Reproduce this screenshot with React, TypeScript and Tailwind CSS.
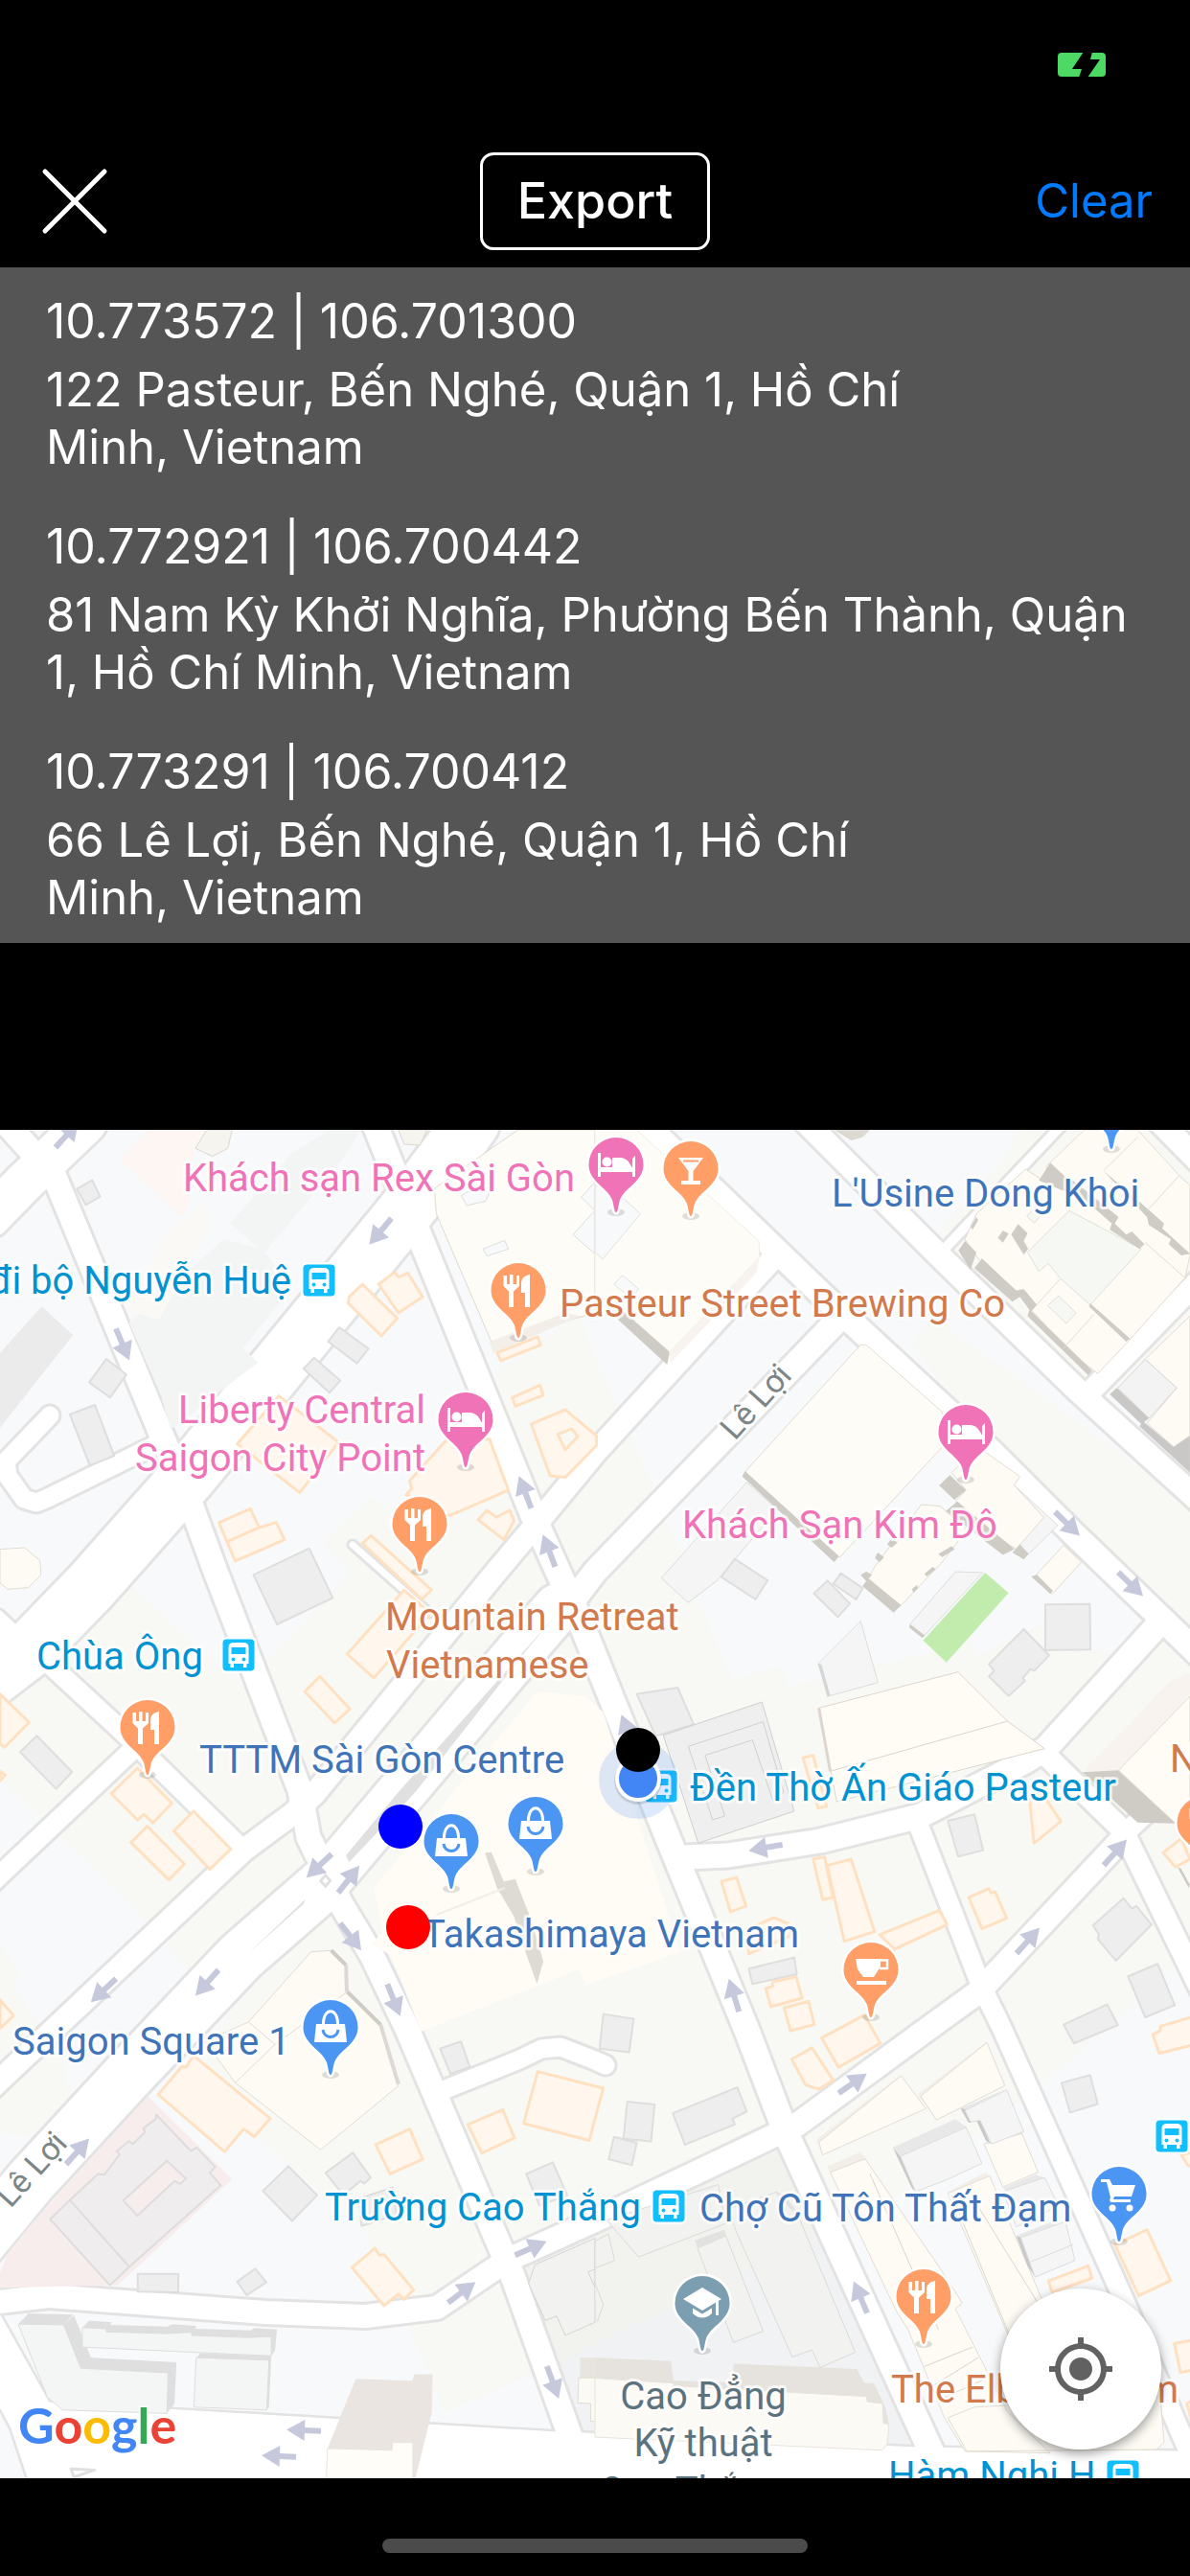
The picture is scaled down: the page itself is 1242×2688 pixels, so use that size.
import type { ReactNode } from "react";
import { MdMyLocation } from "react-icons/md";

type Place = { coords: string; address: string };

const PLACES: Place[] = [
  { coords: "10.773572 | 106.701300", address: "122 Pasteur, Bến Nghé, Quận 1, Hồ Chí\nMinh, Vietnam" },
  { coords: "10.772921 | 106.700442", address: "81 Nam Kỳ Khởi Nghĩa, Phường Bến Thành, Quận\n1, Hồ Chí Minh, Vietnam" },
  { coords: "10.773291 | 106.700412", address: "66 Lê Lợi, Bến Nghé, Quận 1, Hồ Chí\nMinh, Vietnam" },
];

/* ---------- streets: [path, inner width] ---------- */

const STREETS: [string, number][] = [
  ["M0,1165 57,1228 178,1520 200,1572 225,1640 313,1868 322,1917 355,1985 388,2040 424,2115 523,2347 534,2372 596,2545", 25],
  ["M-10,1270 25,1234 90,1172", 42],
  ["M492,1172 425,1262 197,1540 95,1655 30,1722 -30,1768", 58],
  ["M388,1165 434,1280 560,1590 605,1690 700,1925 780,2120 820,2225 975,2565", 26],
  ["M805,1315 621,1516 560,1590 518,1640 328,1872 305,1893 255,1930 62,2112 -10,2180", 23],
  ["M870,1382 621,1640 583,1690", 25],
  ["M582,1678 560,1703 338,1966", 50],
  ["M338,1966 251,2042 139,2160 32,2276 -25,2345", 54],
  ["M660,1160 858,1351 1036,1516 1120,1600 1260,1735", 25],
  ["M832,1162 981,1311 1125,1451 1260,1574", 24],
  ["M985,1304 1110,1172", 10],
  ["M1140,1450 1260,1327", 22],
  ["M1205,1165 1265,1226", 24],
  ["M1209,1695 1092,1824 1070,1838 960,1895 856,1921 760,1936 715,1938", 25],
  ["M1090,1830 1172,1910 1255,2080", 22],
  ["M1175,1912 1265,1828", 20],
  ["M1170,1920 1022,2078 960,2123 832,2217 621,2317 530,2358 456,2408 381,2417 277,2413 51,2396 -10,2403", 24],
  ["M957,1900 1024,2072 1045,2115 1173,2400 1250,2580", 20],
  ["M455,2184 540,2150 565,2138 585,2136 621,2150 632,2155", 19],
  ["M162,1508 48,1564 38,1568 25,1564 8,1540 6,1525 52,1477", 19],
  ["M368,1612 448,1683", 7],
  ["M50,1735 127,1806 248,1925", 20],
  ["M135,1829 -10,1966", 20],
  ["M-5,1690 25,1718", 22],
];

/* ---------- building footprints, grouped by map tile ---------- */

type Shape = { fill: string; stroke?: string; width?: number; d: string };

const GREY = { fill: "#eeeeee", stroke: "#dedede", width: 2 };
const ORANGE = { fill: "#fff6ed", stroke: "#ffe1c2", width: 3 };
const CREAM = { fill: "#fdfbf4", stroke: "#e2ddd2", width: 1 };
const PALE = { fill: "#f4f5f4", stroke: "#dcdedd", width: 1 };
const SHADE = { fill: "#cfcbc5" };

type Tile = { transform: string; shapes: Shape[] };

const TILES: Tile[] = [
  {
    transform: "translate(0 1170) scale(.396 .3333)",
    shapes: [
      { fill: "#ebebeb", d: "M110,580 192,670 0,960 0,725Z" },
      { fill: "#f3f4f4", d: "M340,630 590,370 690,400 770,520 640,710 680,755 450,965 425,860Z M606,320 770,100 870,27 950,27 905,115 697,412Z" },
      { fill: "#fbf9f6", d: "M330,590 440,350 545,250 550,330 420,620Z" },
      { fill: "#fdf6f3", d: "M315,120 390,27 540,27 510,90 500,240 480,300Z" },
      { fill: "#f6f4ef", stroke: "#dcd8cf", width: 1, d: "M515,85 545,27 612,27 600,85 560,110Z M1050,27 1125,27 1107,75 1065,72Z" },
      { fill: "#fdfcf6", stroke: "#dedacf", width: 1, d: "M1365,27 1568,27 1568,600 1295,690 1150,290 1145,210Z" },
      { fill: "#f8f9fb", stroke: "#dddddd", width: 1, d: "M1273,400 1330,373 1340,400 1283,422Z M1215,232 1260,205 1290,225 1280,250 1230,264Z M1568,190 1532,238 1568,280 1510,355 1568,415Z" },
      { fill: "#f4eee9", d: "M1290,690 1490,600 1530,610 1300,725Z" },
      { ...GREY, d: "M203,212 243,184 264,236 226,262Z M280,744 333,793 290,865 235,818Z M184,918 250,888 301,1047 237,1078Z M894,645 971,712 941,758 865,690Z M828,740 897,812 868,850 800,775Z" },
      { ...ORANGE, d: "M955,510 1047,617 1005,672 918,570 920,550Z M1040,473 1050,488 1075,475 1114,550 1050,600 998,510Z M1310,725 1417,675 1425,700 1320,750Z M1350,865 1423,826 1432,858 1358,892Z M1490,903 1572,985 1572,1015 1490,1115 1450,1110 1400,948Z M735,860 892,1005 790,1163 625,1010Z M1290,995 1340,1155 1185,1235 1070,1170 1085,1150 1080,1125 1175,1000Z M1283,1218 1308,1240 1343,1218 1355,1250 1328,1310 1260,1248Z M577,1257 660,1213 683,1272 728,1256 750,1310 620,1377Z M978,1297 1137,1467 1112,1497 955,1322Z M600,1315 683,1272" },
      { ...ORANGE, fill: "#f8f9f3", d: "M1470,980 1507,963 1523,987 1490,1028Z" },
      { ...CREAM, d: "M0,1340 65,1335 105,1375 108,1420 75,1460 20,1465 0,1445Z" },
    ],
  },
  {
    transform: "translate(621 1170) scale(.396 .3333)",
    shapes: [
      { ...CREAM, fill: "#fdfcf6", stroke: "#f0ede6", d: "M0,27 110,27 432,375 434,425 195,725 75,625 0,545Z" },
      { fill: "#f8f9fb", stroke: "#e2e2e2", width: 1, d: "M0,200 60,225 120,290 20,432 0,410Z M50,510 72,482 115,525 95,555Z" },
      { ...SHADE, d: "M75,595 197,722 190,762 60,620Z" },
      { fill: "#f9f3ef", d: "M434,425 425,475 200,755 195,722Z" },
      { ...PALE, d: "M400,1130 480,1215 320,1440 245,1507 175,1430Z" },
      { ...CREAM, fill: "#fdfcf6", d: "M700,700 715,700 915,910 915,1020 645,1365 395,1098Z" },
      { ...SHADE, d: "M395,1095 643,1362 630,1380 405,1130 388,1112Z" },
      { ...PALE, d: "M1105,1140 1220,1265 1143,1355 1110,1340Z" },
      { ...CREAM, d: "M940,1100 1010,1020 1120,1112 1105,1140 1183,1240 1110,1340 1060,1300 950,1190 978,1155Z M860,1200 910,1205 980,1280 915,1380 805,1518 720,1430 740,1390Z M1235,1328 1282,1380 1205,1480 1155,1430Z" },
      { ...SHADE, d: "M935,1108 978,1155 947,1185 907,1140Z M955,1190 1105,1340 1075,1358 925,1220Z M1120,1325 1143,1355 1130,1372 1100,1350Z M745,1350 762,1365 750,1380 738,1368Z M780,1310 798,1318 782,1335 770,1325Z M940,1330 948,1340 915,1365 905,1355Z M890,1395 898,1402 875,1425 868,1418Z" },
      { ...CREAM, d: "M975,370 1005,290 1135,150 1200,200 1190,140 1290,27 1430,27 1540,170 1568,200 1568,420 1555,490 1405,690 1325,790 1240,710 1150,590 1110,530 1010,430Z" },
      { fill: "#f6f8f3", stroke: "#e2e0d8", width: 1, d: "M1140,410 1250,280 1440,400 1305,575 1225,490 1195,445 1170,470Z M1222,547 1268,600 1242,633 1193,577Z M1160,270 1178,290 1158,318 1138,298Z" },
      { ...SHADE, d: "M975,375 1005,410 990,465 958,405Z M1020,430 1110,530 1130,525 1165,575 1150,595 1310,780 1300,795 1140,610 1145,590 1120,550 1100,565 1000,460Z M1200,130 1240,175 1265,190 1380,300 1370,320 1400,355 1415,345 1448,385 1435,400 1357,340 1362,320 1290,245 1170,185Z M1340,155 1400,215 1500,320 1495,335 1568,415 1545,420 1512,385 1518,370 1460,325 1455,300Z M1115,322 1140,350 1130,375 1142,400 1130,418 1097,355Z M1075,342 1090,352 1075,380 1062,365Z M1305,570 1410,680 1400,690 1302,580Z M990,330 1005,300 1010,310 995,340Z" },
      { fill: "none", stroke: "#e2ddd2", width: 1, d: "M1225,495 1160,580 M1315,605 1235,710 M1450,380 1555,490 M1540,170 1455,280 M1430,50 1340,155" },
      { ...CREAM, d: "M1568,610 1450,745 1533,835 1455,945 1525,1020 1568,985Z" },
      { fill: "#f3f3f3", stroke: "#d8d8d8", width: 1, d: "M1450,745 1533,835 1460,930 1378,835Z" },
      { ...SHADE, fill: "#c9c8c6", d: "M1375,835 1460,930 1440,948 1357,855Z M1445,940 1525,1020 1568,985 1568,1100 1435,955Z" },
      { fill: "#dcd8d2", d: "M630,27 725,27 705,50 675,60Z" },
    ],
  },
  {
    transform: "translate(0 1640) scale(.396 .3333)",
    shapes: [
      { fill: "#fffcf5", d: "M985,990 1415,375 1540,390 1590,440 1793,1190 1545,1295 1525,1245 1110,1440 1030,1200 975,1165 1010,1130Z" },
      { fill: "#dedad4", d: "M1278,880 1295,878 1328,970 1358,962 1400,1090 1432,1220 1415,1290 1385,1190 1355,1080 1310,990Z" },
      { fill: "none", stroke: "#f0eee8", width: 2, d: "M1150,1075 1330,990" },
      { fill: "#e0e0e0", d: "M1470,130 1395,235 1095,690 920,910 912,888 1050,690Z M805,1025 800,1040 650,1200Z" },
      { fill: "#ffffff", stroke: "#e0e0e0", width: 3, d: "M858,950 870,968 858,985 845,968Z" },
      { ...GREY, d: "M668,10 815,-73 877,82 730,165Z M97,514 190,627 148,680 53,565Z" },
      { ...ORANGE, d: "M0,383 77,472 12,550 0,540Z M0,625 14,637 0,655Z M1065,58 1135,130 985,333 915,258Z M843,328 922,430 882,474 803,375Z M362,615 453,725 403,787 380,760 362,777 293,695Z M388,797 486,915 445,965 345,848Z M510,750 608,868 553,932 458,812Z M0,1340 36,1390 0,1430Z" },
      { ...CREAM, d: "M820,1190 873,1186 912,1232 915,1315 1005,1420 1050,1610 845,1810 620,1600 540,1470 655,1410Z" },
      { fill: "none", stroke: "#cfcbc5", width: 4, d: "M873,1186 912,1232 M915,1315 1003,1418" },
      { fill: "none", stroke: "#ddd8d4", width: 4, d: "M912,1232 914,1315 M1003,1418 1050,1605" },
      { fill: "none", stroke: "#e2ddd2", width: 1, d: "M655,1410 725,1480 620,1600 M725,1480 915,1315" },
    ],
  },
  {
    transform: "translate(621 1640) scale(.396 .3333)",
    shapes: [
      { fill: "#c1ecae", d: "M1028,3 1090,67 926,284 865,215Z" },
      { ...PALE, d: "M950,0 1022,3 868,200 830,165Z M700,155 746,347 615,390 588,288Z" },
      { ...SHADE, d: "M830,165 870,200 862,207 828,175Z M720,22 807,105 787,128 705,45Z M700,10 715,0 730,10 715,30Z M1150,15 1165,10 1207,60 1200,70Z M835,55 848,42 852,50 840,66Z" },
      { ...SHADE, fill: "#d4d7d5", d: "M588,288 597,290 620,388 612,392Z" },
      { ...GREY, d: "M110,383 218,363 260,478 160,515Z M1187,103 1304,101 1306,244 1187,246Z M1130,180 1197,262 1158,310 1148,305 1127,333 1133,342 1090,389 1038,328 1052,310 1038,290Z M930,780 1000,760 1023,872 957,892Z M405,1243 525,1208 532,1260 415,1291Z M1393,1022 1415,1055 1427,1047 1467,1105 1373,1218 1325,1150 1328,1135 1312,1108Z M1405,1267 1483,1228 1528,1357 1450,1395Z M1235,1418 1350,1355 1378,1420 1262,1477Z M22,1385 102,1400 90,1505 12,1493Z M368,-40 455,27 423,87 333,17Z M613,28 672,100 640,142 577,68Z M648,5 706,52 688,87 628,38Z" },
      { fill: "#efefef", stroke: "#cfcfcf", width: 1, d: "M180,512 440,408 525,750 272,850Z M246,547 443,470 497,690 470,720 415,527 290,575 342,765 310,777Z" },
      { fill: "#fefcf5", stroke: "#dcd6cc", width: 1, d: "M590,427 957,314 1087,468 1185,554 637,720Z M620,625 1087,468" },
      { fill: "none", stroke: "#ddd6cf", width: 3, d: "M590,427 620,625" },
      { fill: "#f8f3ef", d: "M1568,380 1405,620 1285,628 1520,340 1568,320Z" },
      { fill: "#fffcf5", stroke: "#e2ddd2", width: 1, d: "M1568,390 1380,622 1530,788 1568,740Z" },
      { ...SHADE, d: "M1285,628 1378,622 1530,788 1430,785 1370,720Z M1535,925 1545,930 1568,980 1565,990Z" },
      { ...ORANGE, d: "M548,583 575,575 610,735 588,740Z M333,970 373,957 398,1047 357,1065Z M575,900 605,893 627,1020 600,1027Z M612,920 675,900 737,1127 657,1157Z M750,1137 908,1060 928,1105 790,1182Z M1145,710 1185,705 1228,782 1157,850Z M985,1020 1038,992 1043,1005 1055,1003 1085,1085 1020,1118Z M400,1120 472,1083 515,1105 515,1140 405,1197Z M450,1305 468,1298 468,1285 530,1268 546,1335 463,1362Z M498,1365 563,1345 578,1418 515,1437Z M1497,880 1545,835 1568,900 1530,925Z" },
    ],
  },
  {
    transform: "translate(0 2110) scale(.396 .3686)",
    shapes: [
      { fill: "#f8eded", d: "M390,210 612,445 310,745 290,745 0,752 0,710 20,655 80,575Z" },
      { fill: "#efedee", stroke: "#dedcdd", width: 2, d: "M412,262 503,365 518,355 567,410 553,427 582,462 342,692 290,745 132,558 185,503 258,430 275,432 315,375 308,365 340,337 350,345 382,312 378,300 410,275Z M185,505 340,692" },
      { fill: "#f8eded", stroke: "#dedcdd", width: 2, d: "M440,393 490,443 475,458 460,450 362,548 325,505Z" },
      { ...ORANGE, d: "M510,95 712,273 670,325 642,303 592,367 417,205 480,125 490,128Z M990,347 1080,303 1114,388 1028,430Z M1233,290 1325,248 1356,328 1270,371Z M1417,140 1590,187 1553,335 1380,287Z M988,640 1000,660 1012,658 1090,758 1065,785 1050,770 1012,803 928,695Z" },
      { ...GREY, d: "M1160,75 1215,55 1238,127 1187,147Z M760,408 836,490 770,563 693,478Z M930,370 977,440 960,457 950,450 905,490 858,427Z M1387,430 1457,397 1495,490 1422,520Z M363,713 470,713 470,765 363,763Z M673,698 702,737 650,773 625,735Z M945,500 1035,468 1045,545 953,577Z" },
      { fill: "#dfdfdf", d: "M48,855 75,825 193,828 168,857Z M217,865 235,845 295,850 290,857 440,862 455,855 517,860 515,868 660,873 670,866 730,870 725,930 715,945 715,890 655,893 505,887 505,878 440,882 280,877Z M517,950 528,937 715,945 709,1090 703,1098Z M168,857 195,830 240,950 465,963 460,1080 440,1108 443,993 213,980Z" },
      { fill: "#f4f6f5", stroke: "#dddddd", width: 1, d: "M48,855 168,857 213,980 443,993 440,1108 165,1098 125,1062Z M217,865 280,868 280,877 440,882 505,878 505,887 655,893 715,890 715,945 217,920Z M517,950 709,957 703,1098 511,1090Z" },
      { fill: "#eae5e1", d: "M938,1010 1087,1015 1092,997 1140,997 1138,1105 1095,1291 1085,1291 1088,1190 1035,1190 1033,1212 863,1207Z" },
      { fill: "#fffdf8", stroke: "#e8e4dc", width: 1, d: "M863,1207 1033,1212 1035,1190 1088,1190 1088,1300 860,1300Z" },
      { fill: "#f2f2f0", stroke: "#d4d4d2", width: 1, d: "M1410,687 1568,612 1568,850 1490,887 1467,832 1437,845 1393,740Z M1568,700 1550,707 1568,752" },
      { fill: "#e8e4df", d: "M1530,950 1568,950 1568,1007 1528,1007Z" },
      { fill: "#fbfaf5", stroke: "#e2ddd2", width: 1, d: "M1525,1007 1570,1007 1570,1130 1557,1130 1557,1080 1523,1078Z" },
      { fill: "none", stroke: "#e0e0e0", width: 3, d: "M187,1265 250,1268 195,1288Z" },
    ],
  },
  {
    transform: "translate(621 2110) scale(.396 .3686)",
    shapes: [
      { fill: "#f2f2f0", stroke: "#dadad8", width: 1, d: "M30,560 325,460 345,570 115,665Z M270,640 345,605 443,875 365,907Z M350,530 480,480 540,560 686,935 593,978 572,928 520,948 375,600Z M0,620 35,600 52,675 0,697Z M0,740 22,800 5,850" },
      { fill: "#e2e2e1", d: "M263,618 340,588 347,605 270,640Z M470,478 500,490 535,540 520,530Z" },
      { fill: "#e6e2dd", d: "M0,950 200,960 207,1015 365,1020 365,967 690,982 710,1022 735,1022 765,1090 775,1140 760,1135 755,1085 715,1075 0,1030Z" },
      { fill: "#fbfaf5", stroke: "#e8e4dc", width: 1, d: "M0,1008 205,1022 210,1030 715,1060 718,1075 758,1080 760,1135 775,1140 770,1195 757,1212 0,1175Z" },
      { ...GREY, d: "M85,225 157,233 148,338 75,330Z M50,325 110,342 97,405 36,388Z M205,258 375,185 400,253 363,273 368,290 237,347Z M1230,172 1305,150 1325,232 1252,256Z" },
      { ...ORANGE, d: "M572,73 628,165 590,190 555,178 518,105Z M597,45 710,-20 752,60 642,128Z M1370,630 1455,588 1517,732 1433,775Z M1195,733 1300,690 1310,725 1205,765Z M1527,910 1575,900 1575,985 1543,992Z M1470,35 1490,25 1490,12 1575,-15 1575,65 1487,88Z M1545,375 1575,370 1575,410 1562,405Z M1560,1080 1575,1070 1575,1140Z" },
      { fill: "#f4eee9", d: "M583,333 807,148 800,160 600,376Z M612,408 702,367 712,387 620,425Z M850,205 1033,55 1028,70 900,277Z M930,480 1030,425 1042,440 940,490Z" },
      { ...CREAM, d: "M590,340 807,152 872,245 600,376Z M858,210 1033,58 1080,180 900,277Z M620,425 712,387 905,690 968,795 950,812 1085,1100 1200,1220 975,1215 920,1118 825,870 795,820Z M930,485 1040,435 1180,790 1090,890Z M930,1120 1000,1090 1490,1060 1500,1190 1480,1210 980,1215Z M1025,345 1125,315 1168,425 1075,467Z" },
      { fill: "#c9c9c9", d: "M785,355 805,380 845,480 835,470Z M963,245 975,243 992,285 985,285Z M1005,278 1018,278 1042,345 1030,335Z M1110,605 1125,610 1160,722 1140,690Z" },
      { fill: "#e8e8e8", d: "M785,355 950,275 980,297 805,380Z M965,245 1060,200 1085,190 980,247Z M1075,470 1160,432 1185,440 1090,480Z M1110,605 1215,560 1225,570 1125,610Z" },
      { ...PALE, d: "M975,250 1085,192 1130,310 1045,345 1015,278 990,283Z M805,380 978,298 1020,400 930,445 845,480Z M1075,480 1185,440 1222,520 1110,580Z M1122,610 1240,565 1265,675 1160,722Z M1145,680 1260,630" },
      { fill: "none", stroke: "#dad5cb", width: 1, d: "M868,975 995,920 M890,1030 1010,950 M905,1070 1030,1010 M725,430 905,870 M940,490 1090,880 M980,470 1170,800" },
    ],
  },
];

/* ---------- one-way arrows: x, y, heading ---------- */

const ARROWS: [number, number, number][] = [
  [70, 1184, -48], [397, 1285, 130], [128, 1403, 67], [548, 1557, -111], [573, 1618, -111],
  [1114, 1590, 44], [1180, 1653, 44], [655, 1806, -111], [799, 1928, 170], [766, 2082, -107],
  [1164, 1933, -48], [1073, 2025, -48], [333, 1947, 137], [364, 1961, -52], [366, 2021, 52],
  [411, 2087, 68], [108, 2077, 137], [216, 2069, 132], [81, 2245, -48], [554, 2346, -24],
  [482, 2392, -37], [577, 2486, 70], [317, 2536, 182], [291, 2563, 182], [890, 2174, -35],
  [898, 2397, -113],
];

/* ---------- pins ---------- */

type PinKind = "food" | "bed" | "bar" | "bag" | "cafe" | "school" | "cart" | "plain";

const PIN_FILL: Record<PinKind, string> = {
  food: "#ff9e67",
  bar: "#ff9e67",
  cafe: "#ff9e67",
  bed: "#f073b7",
  bag: "#4b96f3",
  cart: "#4b96f3",
  plain: "#4b96f3",
  school: "#7b9eb0",
};

const PINS: [PinKind, number, number][] = [
  ["plain", 1160, 1199], ["bed", 643, 1265], ["bar", 721, 1269], ["food", 541, 1396], ["bed", 486, 1531],
  ["bed", 1008, 1544], ["food", 438, 1640], ["food", 154, 1852], ["food", 1257, 1952], ["bag", 471, 1971],
  ["bag", 559, 1953], ["cafe", 909, 2105], ["bag", 345, 2165], ["cart", 1168, 2339], ["school", 733, 2453],
  ["food", 964, 2446],
];

const GLYPHS: Record<PinKind, ReactNode> = {
  plain: null,
  food: (
    <path
      fill="#fff"
      d="M-15.500-15V-4L-10 1.500V18h5V1.500L1-4V-15h-3V-6h-3.500v-10h-3.500v10h-3V-15Z M12-16V18H7V3H3V-8Q4-15 12-16Z"
    />
  ),
  bed: (
    <g fill="#fff">
      <path d="M-19-12h3V3H17V-6L20-9V13H17V8H-16V13H-19Z" />
      <circle cx="-9.500" cy="-2.500" r="5" />
      <path d="M-4-7H5Q12-7 17 4H-4Z" />
    </g>
  ),
  bar: (
    <g>
      <path fill="#fff" d="M-13-11H13L2.500 3V13H10V17H-10V13H-2.500V3Z" />
      <path stroke="#ff9e67" strokeWidth="2" d="M-8-7.500H8" />
    </g>
  ),
  bag: (
    <g>
      <path fill="#fff" d="M-15-3H15L17 16H-17Z" />
      <path fill="none" stroke="#fff" strokeWidth="3" d="M-7.500-2C-8-21 8-21 7.500-2" />
      <path fill="none" stroke="#4b96f3" strokeWidth="3" d="M-8 3C-7 13 7 13 8 3" />
    </g>
  ),
  cafe: (
    <g>
      <path fill="#fff" d="M-16-11H10V-3L3 8H-8L-14 0Z" />
      <path fill="none" stroke="#fff" strokeWidth="2.500" d="M10-9.500H17V-1H9" />
      <path fill="#fff" d="M-15 12H16V16H-15Z" />
    </g>
  ),
  school: (
    <g fill="#fff">
      <path d="M0-16 20-4 0 8-20-4Z" />
      <path d="M14-3H17V13H14Z" />
      <path d="M-10 5.500 0 11.500 10 5.500V11Q0 20-10 11Z" />
    </g>
  ),
  cart: (
    <g fill="#fff">
      <path d="M-19-15H-10L-7-9H17L13 3H-5L-6 6H12V9H-8Q-11 8-9 4L-13-12H-19Z" />
      <circle cx="-7" cy="15" r="3.500" />
      <circle cx="11" cy="15" r="3.500" />
    </g>
  ),
};

function Pin({ kind, x, y }: { kind: PinKind; x: number; y: number }) {
  return (
    <g transform={`translate(${x} ${y})`}>
      <ellipse cx="0" cy="0" rx="9" ry="4" fill="#000" opacity="0.12" />
      <path
        d="M0 0C-2 0-2-6-4-13C-9-26-28.500-32-28.500-49.500A28.500 28.500 0 0 1 28.500-49.500C28.500-32 9-26 4-13C2-6 2 0 0 0Z"
        fill={PIN_FILL[kind]}
        stroke="#fff"
        strokeWidth="5"
        paintOrder="stroke"
      />
      <g transform="translate(0 -50)">{GLYPHS[kind]}</g>
    </g>
  );
}

/* ---------- transit stops ---------- */

const STOPS: [number, number][] = [[333, 1336], [249, 1727], [690, 1864], [698, 2302], [1223, 2229], [1172, 2584]];

function BusStop({ x, y }: { x: number; y: number }) {
  return (
    <g transform={`translate(${x} ${y})`}>
      <rect x="-19" y="-19" width="38" height="38" rx="6" fill="#fff" />
      <rect x="-16.500" y="-16.500" width="33" height="33" rx="4" fill="#11bfff" />
      <path fill="#fff" d="M-10.500 9V-8Q-10.500-13-5-13H5Q10.500-13 10.500-8V9H8.500V13H5V9H-5V13H-8.500V9Z" />
      <path fill="#11bfff" d="M-7.500-8H7.500V-1H-7.500Z" />
      <circle cx="-5.500" cy="4.500" r="2" fill="#11bfff" />
      <circle cx="5.500" cy="4.500" r="2" fill="#11bfff" />
    </g>
  );
}

/* ---------- labels ---------- */

type Label = { text: string; x: number; y: number; color: string; anchor?: "start" | "middle" | "end" };

const PINK = "#f073b7";
const CYAN = "#0092d1";
const BLUE = "#3f74b8";
const RUST = "#d27a4c";
const SLATE = "#5b737f";

const LABELS: Label[] = [
  { text: "Khách sạn Rex Sài Gòn", x: 600, y: 1243, color: PINK, anchor: "end" },
  { text: "đi bộ Nguyễn Huệ", x: 304, y: 1350, color: CYAN, anchor: "end" },
  { text: "Liberty Central", x: 444, y: 1485, color: PINK, anchor: "end" },
  { text: "Saigon City Point", x: 444, y: 1535, color: PINK, anchor: "end" },
  { text: "Pasteur Street Brewing Co", x: 584, y: 1374, color: RUST },
  { text: "L'Usine Dong Khoi", x: 868, y: 1259, color: BLUE },
  { text: "Khách Sạn Kim Đô", x: 712, y: 1605, color: PINK },
  { text: "Mountain Retreat", x: 402, y: 1701, color: RUST },
  { text: "Vietnamese", x: 403, y: 1751, color: RUST },
  { text: "Chùa Ông", x: 38, y: 1742, color: CYAN },
  { text: "TTTM Sài Gòn Centre", x: 208, y: 1850, color: BLUE },
  { text: "Đền Thờ Ấn Giáo Pasteur", x: 720, y: 1879, color: CYAN },
  { text: "N", x: 1221, y: 1849, color: RUST },
  { text: "Takashimaya Vietnam", x: 441, y: 2032, color: BLUE },
  { text: "Saigon Square 1", x: 13, y: 2144, color: BLUE },
  { text: "Trường Cao Thắng", x: 339, y: 2317, color: CYAN },
  { text: "Chợ Cũ Tôn Thất Đạm", x: 730, y: 2318, color: BLUE },
  { text: "Cao Đẳng", x: 734, y: 2514, color: SLATE, anchor: "middle" },
  { text: "Kỹ thuật", x: 734, y: 2563, color: SLATE, anchor: "middle" },
  { text: "Cao Thắng", x: 721, y: 2613, color: SLATE, anchor: "middle" },
  { text: "The Elbow Room", x: 930, y: 2507, color: RUST },
  { text: "Hàm Nghi H", x: 927, y: 2597, color: CYAN },
];

const STREET_NAMES: [number, number, number][] = [[767, 1504, -48], [11, 2305, -48]];

const GOOGLE: [string, string][] = [
  ["G", "#4285f4"], ["o", "#ea4335"], ["o", "#fbbc05"], ["g", "#4285f4"], ["l", "#34a853"], ["e", "#ea4335"],
];

function CityMap() {
  return (
    <svg
      className="absolute inset-0 h-full w-full bg-[#f8f9fb] font-[Roboto,'Noto_Sans',sans-serif]"
      viewBox="0 1179 1242 1407"
      preserveAspectRatio="xMidYMid slice"
      role="img"
      aria-label="Map of central Saigon"
    >
      <g fill="#f8f9f4">
        <path d="M520,1430 605,1370 621,1417 655,1490 710,1620 730,1673 765,1753 815,1738 823,1760 960,1727 1010,1713 1021,1727 1092,1693 1156,1727 1200,1690 1242,1740 1242,2040 1200,2075 1132,2136 1092,2171 940,2290 858,2331 780,2375 621,2445 554,2479 463,2517 428,2431 380,2327 273,2234 200,2180 251,2077 198,2057 127,1977 0,1857 0,1770 60,1723 133,1653 253,1760 366,1640 337,1610 386,1562 430,1590Z" />
        <path d="M950,1403 975,1375 1242,1570 1242,1745Z" />
        <path d="M975,1290 1055,1200 1060,1179 1242,1179 1242,1480 1120,1440 985,1300Z" />
        <path d="M0,2030 20,2055 16,2075 65,2150 75,2195 35,2230 0,2225Z" />
      </g>
      <path fill="#f1f2f4" d="M545,2364 815,2243 958,2554 610,2539Z" />
      <path fill="#f2f3ee" d="M545,2364 815,2243 858,2331 621,2445 585,2465Z" />

      <g fill="none" stroke="#e3e3e3" strokeLinecap="round" strokeLinejoin="round">
        {STREETS.map(([d, w]) => (
          <path key={d} d={d} strokeWidth={w + 6} />
        ))}
        <path
          strokeWidth="6"
          d="M-6,2405 51,2507 582,2538 610,2539 958,2554 1229,2558 1250,2558 1250,2600 34,2600 12,2534 -6,2500Z"
        />
      </g>
      <g fill="none" stroke="#ffffff" strokeLinecap="round" strokeLinejoin="round">
        {STREETS.map(([d, w]) => (
          <path key={d} d={d} strokeWidth={w} />
        ))}
        <path
          fill="#ffffff"
          strokeWidth="1"
          d="M-6,2405 51,2507 582,2538 610,2539 958,2554 1229,2558 1250,2558 1250,2600 34,2600 12,2534 -6,2500Z"
        />
      </g>

      {TILES.map((tile) => (
        <g key={tile.transform} transform={tile.transform} strokeLinejoin="round">
          {tile.shapes.map((s) => (
            <path key={s.d} d={s.d} fill={s.fill} stroke={s.stroke} strokeWidth={s.width} vectorEffect="non-scaling-stroke" />
          ))}
        </g>
      ))}

      <g fill="#c6c9dc">
        {ARROWS.map(([x, y, a]) => (
          <path
            key={`${x}-${y}`}
            transform={`translate(${x} ${y}) rotate(${a})`}
            d="M18 0-1 11V3H-18V-3H-1V-11Z"
          />
        ))}
      </g>

      {PINS.map(([kind, x, y]) => (
        <Pin key={`${x}-${y}`} kind={kind} x={x} y={y} />
      ))}
      {STOPS.map(([x, y]) => (
        <BusStop key={`${x}-${y}`} x={x} y={y} />
      ))}

      <g fontSize="40" stroke="#ffffff" strokeOpacity="0.75" strokeWidth="6" strokeLinejoin="round" paintOrder="stroke">
        {LABELS.map((l) => (
          <text key={`${l.x}-${l.y}`} x={l.x} y={l.y} fill={l.color} textAnchor={l.anchor ?? "start"}>
            {l.text}
          </text>
        ))}
        {STREET_NAMES.map(([x, y, a]) => (
          <text key={`${x}-${y}`} transform={`translate(${x} ${y}) rotate(${a})`} fill="#7d8686" fontSize="34">
            Lê Lợi
          </text>
        ))}
      </g>

      <circle cx="666" cy="1857" r="41" fill="#4285f4" fillOpacity="0.18" />
      <circle cx="666" cy="1858" r="25" fill="#000" fillOpacity="0.12" />
      <circle cx="666" cy="1856" r="22" fill="#4285f4" stroke="#fff" strokeWidth="4" />
      <circle cx="666" cy="1826" r="23" fill="#000" />
      <circle cx="418" cy="1906" r="23" fill="#00f" />
      <circle cx="426" cy="2011" r="23" fill="#f00" />

      <text
        className="font-[Lato,sans-serif] font-bold"
        x="19"
        y="2550"
        fontSize="52"
        stroke="#fff"
        strokeOpacity="0.6"
        strokeWidth="4"
        paintOrder="stroke"
      >
        {GOOGLE.map(([c, color], i) => (
          <tspan key={i} fill={color}>
            {c}
          </tspan>
        ))}
      </text>
    </svg>
  );
}

export default function App() {
  return (
    <div className="flex min-h-screen flex-col bg-black font-[Inter,'Noto_Sans',sans-serif] text-white">
      <div className="flex h-[141px] justify-end pt-[55px] pr-[88px]">
        <svg className="h-[25px] w-[50px]" viewBox="0 0 50 25" role="img" aria-label="Battery charging">
          <rect width="50" height="25" rx="4" fill="#4cd964" />
          <path d="M27-1H36L34 7H44L31 26H22L25 17H15Z" fill="#000" />
        </svg>
      </div>

      <header className="grid h-[138px] grid-cols-3 items-center px-[39px]">
        <button type="button" aria-label="Close" className="justify-self-start p-1">
          <svg className="size-[70px]" viewBox="0 0 70 70" fill="none" stroke="#fff" strokeWidth="5" strokeLinecap="round">
            <path d="M4 4 66 66M66 4 4 66" />
          </svg>
        </button>
        <button
          type="button"
          className="h-[102px] w-60 justify-self-center rounded-[14px] border-3 border-white text-[52px] leading-[60px] font-medium"
        >
          Export
        </button>
        <button type="button" className="justify-self-end text-[49px] leading-[60px] text-[#007aff]">
          Clear
        </button>
      </header>

      <ul className="bg-[#555555] px-12 text-[49px] leading-[60px]">
        {PLACES.map((p) => (
          <li key={p.coords} className="flex flex-col gap-3 pt-[26px] pb-[17px]">
            <p className="text-[50px] leading-[60px]">{p.coords}</p>
            <p className="whitespace-pre-line">{p.address}</p>
          </li>
        ))}
      </ul>

      <main className="relative mt-[195px] min-h-[1000px] flex-1 overflow-hidden">
        <CityMap />
        <button
          type="button"
          aria-label="My location"
          className="absolute right-[30px] bottom-[30px] flex size-[168px] items-center justify-center rounded-full bg-white shadow-[0_4px_12px_rgba(0,0,0,0.4)]"
        >
          <MdMyLocation className="size-[72px] text-[#616161]" />
        </button>
      </main>

      <footer className="flex h-[102px] items-end justify-center pb-6">
        <div className="h-[15px] w-[444px] rounded-full bg-[#4b4b4b]" />
      </footer>
    </div>
  );
}
